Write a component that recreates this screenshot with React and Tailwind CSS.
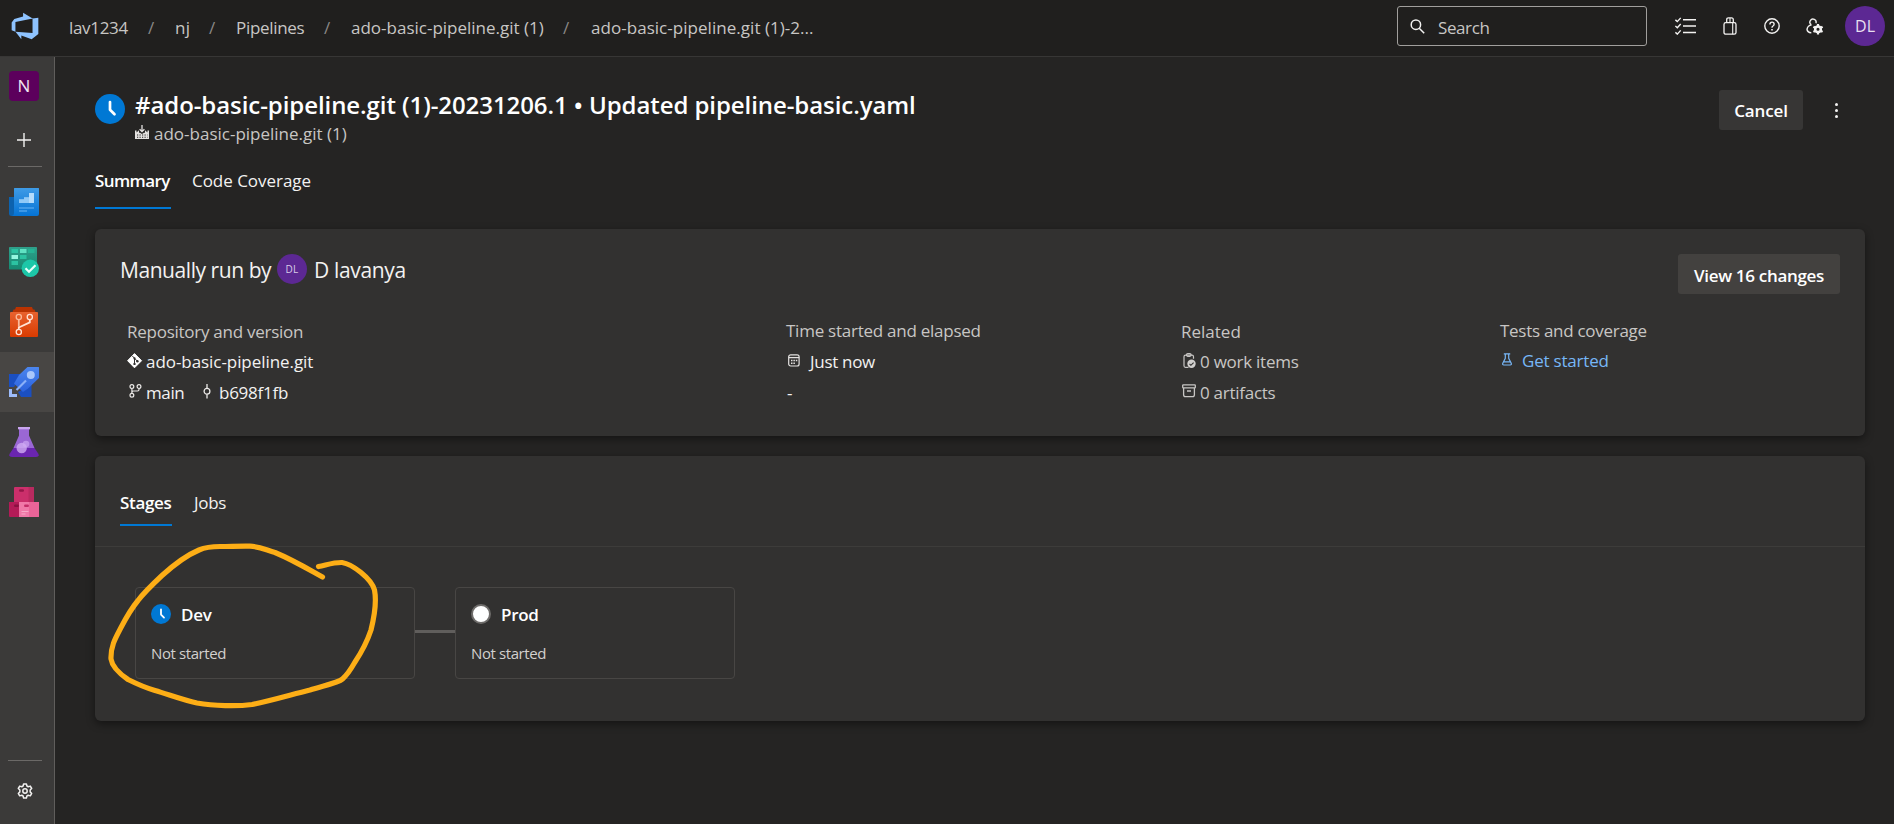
import React from "react";

/* ---------- product icons (side bar) ---------- */

const OverviewIcon = () => (
  <svg width="30" height="30" viewBox="0 0 30 30">
    <defs>
      <linearGradient id="ov" x1="0" y1="0" x2="0" y2="1">
        <stop offset="0" stopColor="#3f9be6" />
        <stop offset="1" stopColor="#0573d4" />
      </linearGradient>
    </defs>
    <path d="M0 10h6v19H2.500A2.500 2.500 0 0 1 0 26.500z" fill="#0d62ae" />
    <path d="M5 1.500q0-.5.500-.5h24q.5 0 .5.500V27a2 2 0 0 1-2 2H3q2-.5 2-3z" fill="url(#ov)" />
    <path d="M10 16v-3.500h5v-2h5v-4.500h5v10z" fill="#b5dcfb" />
    <path d="M10 16v-3.500h5v-2h5V16z" fill="#90c9f7" />
    <path d="M10 21h15M10 24h8" stroke="#6cb6f3" strokeWidth="1.200" />
  </svg>
);

const BoardsIcon = () => (
  <svg width="30" height="30" viewBox="0 0 30 30">
    <defs>
      <linearGradient id="bd" x1="0" y1="0" x2="0" y2="1">
        <stop offset="0" stopColor="#2fa08b" />
        <stop offset="1" stopColor="#168a72" />
      </linearGradient>
    </defs>
    <rect width="28" height="22.500" rx=".8" fill="url(#bd)" />
    <g fill="#2cc3a2">
      <rect x="2.500" y="2" width="6.500" height="4" />
      <rect x="19" y="2" width="6.500" height="4" fill="#25b394" />
      <rect x="11" y="8" width="6.500" height="4" />
      <rect x="2.500" y="14" width="6.500" height="4" />
    </g>
    <rect x="11" y="2" width="6.500" height="4" fill="#60e2c3" />
    <rect x="2.500" y="8" width="6.500" height="4" fill="#94f5df" />
    <circle cx="21.300" cy="21.300" r="8.700" fill="#1cc7a8" />
    <path d="M16.500 21.300l3.500 3.500 6.500-6.600" fill="none" stroke="#e4fffa" strokeWidth="2.200" />
  </svg>
);

const ReposIcon = () => (
  <svg width="30" height="30" viewBox="0 0 30 30">
    <defs>
      <linearGradient id="rp" x1="0" y1="0" x2="0" y2="1">
        <stop offset="0" stopColor="#e8622f" />
        <stop offset="1" stopColor="#d83b01" />
      </linearGradient>
    </defs>
    <path d="M7 0h16l1 2.500h1.500L26.500 5v2H3.500V5l1-2.500H6z" fill="#b93302" />
    <rect x="1" y="5" width="28" height="25" rx="1" fill="url(#rp)" />
    <g fill="none" stroke="#ffe3d6" strokeWidth="1.300">
      <circle cx="9.800" cy="10" r="2.600" stroke="#fbb999" />
      <circle cx="20.800" cy="10" r="2.600" />
      <circle cx="9.800" cy="25" r="2.600" />
      <path d="M9.800 12.800v7" stroke="#fbb999" strokeWidth="1.800" />
      <path d="M20.800 12.800v2.600L9.800 20.500v1.800" strokeWidth="1.800" />
    </g>
  </svg>
);

const PipelinesIcon = () => (
  <svg width="30" height="30" viewBox="0 0 30 30">
    <defs>
      <linearGradient id="pl" x1="0" y1="0" x2="0" y2="1">
        <stop offset="0" stopColor="#4c86ee" />
        <stop offset="1" stopColor="#2b62dd" />
      </linearGradient>
    </defs>
    <path d="M0 7h14L5 20H0zM9 25l13.500-7V30H12z" fill="#1b4fc0" />
    <path d="M18.500 0H29.500q.5 0 .5.500V11L19 21.500 14 25 5 16.500 10 8z" fill="url(#pl)" />
    <circle cx="21.800" cy="8" r="4" fill="#a9c7fb" />
    <path d="M17 13.500L7.500 23" stroke="#8ab0f8" strokeWidth="2.200" />
    <path d="M0 22h3v5h5v3H0z" fill="#9dbcfa" />
  </svg>
);

const TestPlansIcon = () => (
  <svg width="30" height="30" viewBox="0 0 30 30">
    <path d="M10 2h10v6.500L25.500 21H4.500L10 8.500z" fill="#9a67d4" />
    <path d="M4.500 21h21l4 6q1 3-2.500 3H3q-3.500 0-2.500-3z" fill="#6a25b0" />
    <rect x="9" y="0" width="12" height="2.300" fill="#c8a5ee" />
    <circle cx="17" cy="17" r="3.300" fill="#bd93ea" />
    <circle cx="12.700" cy="21" r="5.200" fill="#cfabf3" fillOpacity=".8" />
  </svg>
);

const ArtifactsIcon = () => (
  <svg width="30" height="30" viewBox="0 0 30 30">
    <path d="M5 .8Q5 0 6 0h18q1 0 1 .8V15H5z" fill="#cb2f6b" />
    <path d="M19.500 0H24q1 0 1 .8V15h-5.500z" fill="#b92a60" />
    <rect x="10" y="2.200" width="5" height="2.500" rx="1.200" fill="#951748" />
    <path d="M0 15h10v15H1q-1 0-1-1z" fill="#b31b57" />
    <rect x="5" y="17.500" width="5" height="2.500" rx="1.200" fill="#8a1140" />
    <path d="M10 15h20v14q0 1-1 1H10z" fill="#f078a8" />
    <path d="M20 15h10v14q0 1-1 1h-9z" fill="#ea6498" />
    <rect x="15" y="17.500" width="5" height="2.500" rx="1.200" fill="#c42d68" />
    <path d="M12.500 24.500h7M12.500 27h4" stroke="#f7a9c8" strokeWidth="1.100" />
  </svg>
);

/* ---------- small glyphs ---------- */

const Gear = () => (
  <svg width="16" height="16" viewBox="0 0 16 16" fill="none" stroke="#f3f2f1" strokeWidth="1.500" strokeLinejoin="round">
    <path d="M6.600.9h2.800l.5 2.100 1.300.75 2.100-.65 1.400 2.400L13.150 7v1.900l1.550 1.550-1.400 2.400-2.100-.6-1.300.75-.5 2.100H6.600l-.5-2.100-1.300-.75-2.100.6-1.400-2.400L2.850 8.900V7L1.300 5.500l1.400-2.400 2.100.65L6.100 3z" />
    <circle cx="8" cy="8" r="2.200" />
  </svg>
);

const Clock = ({ size }) => (
  <svg width={size} height={size} viewBox="0 0 30 30" className="shrink-0">
    <circle cx="15" cy="15" r="15" fill="#0078d4" />
    <path d="M15 8v7.800l4.500 4.500" fill="none" stroke="#fff" strokeWidth="2.700" strokeLinecap="round" strokeLinejoin="round" />
  </svg>
);

const Checklist = () => (
  <svg width="21" height="18" viewBox="0 0 21 18" fill="none" stroke="#f3f2f1" strokeWidth="1.400">
    <path d="M8 2.800h13M8 9h13M8 15.500h13" />
    <path d="M.4 2.800L2.300 4.600 5.700.9M.4 8.900l1.900 1.800 3.400-3.700M.4 15.300l1.900 1.800 3.400-3.700" />
  </svg>
);

const Bag = () => (
  <svg width="14" height="18" viewBox="0 0 14 18" fill="none" stroke="#f3f2f1" strokeWidth="1.300">
    <rect x="1" y="5.600" width="12" height="11.600" rx="1.800" />
    <path d="M3.700 5.600V2.700Q3.700.8 5.500.8h3q1.800 0 1.800 1.900V5.600" />
    <path d="M7 1v4.600M9.700 5.600v11.600" strokeWidth="1.100" />
  </svg>
);

const Help = () => (
  <svg width="16" height="16" viewBox="0 0 16 16" fill="none" stroke="#f3f2f1" strokeWidth="1.400">
    <circle cx="8" cy="8" r="7.200" />
    <path d="M5.900 6.400Q5.900 4.100 8 4.100t2.100 2.100Q10.100 7.300 9 8T8 9.800" />
    <path d="M8 10.900v1.500" strokeWidth="1.600" />
  </svg>
);

const UserGear = () => (
  <svg width="18" height="17" viewBox="0 0 18 17" fill="none" stroke="#f3f2f1" strokeWidth="1.400">
    <path d="M5.100 6.600A3.100 3.100 0 1 1 9.900 5.200" />
    <path d="M5.600 6.900Q1.400 7.600 1.100 11.300M.9 10.600Q1.200 14.600 5.300 14.700" />
    <circle cx="12" cy="11.300" r="2.800" strokeWidth="2.500" />
    <path d="M12 6v2.300M12 14.300v2.300M7.400 8.700l2 1.200M14.600 12.700l2 1.200M7.400 13.900l2-1.200M14.600 9.900l2-1.200" strokeWidth="2.200" />
  </svg>
);

const Magnifier = () => (
  <svg width="15" height="15" viewBox="0 0 15 15" fill="none" stroke="#f3f2f1" strokeWidth="1.500">
    <circle cx="5.900" cy="5.700" r="4.700" />
    <path d="M9.200 9.200l5 5" />
  </svg>
);

const Factory = () => (
  <svg width="14" height="15" viewBox="0 0 14 15" className="shrink-0">
    <path d="M0 14V5.500h1.500v2L4 5.300v2.500h1L7 9l2-1.200h1V5.300l2.500 2.200v-2H14V14z" fill="#e4e2e0" />
    <path d="M7 0v6.500M4.600 4.200L7 6.600l2.400-2.400" fill="none" stroke="#e4e2e0" strokeWidth="1.300" />
    <path d="M2 10h10.500M2 12.300h10.500" stroke="#252423" strokeWidth="1.100" strokeDasharray="1.200 1.300" />
  </svg>
);

const GitMark = () => (
  <svg width="16" height="16" viewBox="0 0 16 16" className="shrink-0">
    <path d="M7.500.6L14.600 7.700 7.500 14.800.6 7.700z" fill="#fff" stroke="#fff" strokeLinejoin="round" />
    <path d="M5.200 2.800L7.500 5.300v6M7.500 5.300l2.900 2.900" fill="none" stroke="#323130" strokeWidth="1" />
    <circle cx="7.500" cy="5.400" r="1.100" fill="#323130" />
    <circle cx="7.500" cy="10.900" r="1.200" fill="#323130" />
    <circle cx="10.400" cy="8.200" r="1.200" fill="#323130" />
  </svg>
);

const Branch = () => (
  <svg width="13" height="14" viewBox="0 0 13 14" fill="none" stroke="#eceae8" strokeWidth="1.200" className="shrink-0">
    <circle cx="2.900" cy="2.600" r="1.900" />
    <circle cx="10" cy="2.600" r="1.900" />
    <circle cx="2.900" cy="11.300" r="1.900" />
    <path d="M2.900 4.500v4.900M10 4.500V5.500Q10 7 8.500 7H4.500Q2.900 7 2.900 8.500" />
  </svg>
);

const Commit = () => (
  <svg width="8" height="15" viewBox="0 0 8 15" fill="none" stroke="#eceae8" strokeWidth="1.300" className="shrink-0">
    <circle cx="4" cy="7.300" r="2.900" />
    <path d="M4 0v4.400M4 10.200v4.400" />
  </svg>
);

const Calendar = () => (
  <svg width="12" height="13" viewBox="0 0 12 13" fill="none" stroke="#e4e2e0" strokeWidth="1.200" className="shrink-0">
    <rect x=".7" y=".8" width="10.400" height="11.200" rx="2" />
    <path d="M.7 3.600h10.400" strokeWidth="1.300" />
    <path d="M3 6.600h6.400M3 9.300h4" strokeWidth="1.500" strokeDasharray="1.500 .9" />
  </svg>
);

const WorkItem = () => (
  <svg width="15" height="16" viewBox="0 0 15 16" fill="none" stroke="#c8c6c4" strokeWidth="1.200" className="shrink-0">
    <path d="M5.500 14.300H2.500Q1 14.300 1 12.800V3.700Q1 2.200 2.500 2.200h6.500Q10.500 2.200 10.500 3.700v2" />
    <rect x="3.500" y=".7" width="4.600" height="2.600" rx="1.200" />
    <circle cx="8.500" cy="10.800" r="4.200" fill="#d2d0ce" stroke="none" />
    <path d="M6.500 10.900l1.400 1.400 2.700-2.700" stroke="#323130" strokeWidth="1.100" />
  </svg>
);

const Archive = () => (
  <svg width="14" height="14" viewBox="0 0 14 14" fill="none" stroke="#c8c6c4" strokeWidth="1.300" className="shrink-0">
    <rect x=".7" y=".9" width="12.600" height="3" rx=".6" />
    <path d="M1.600 4v6.800q0 1.900 1.900 1.900h7q1.900 0 1.900-1.900V4" />
    <path d="M5 7h4" strokeWidth="1.500" />
  </svg>
);

const Flask = () => (
  <svg width="10" height="13" viewBox="0 0 10 13" fill="none" stroke="#77b7f7" strokeWidth="1.200" className="shrink-0">
    <path d="M1.800.8h6.400M3.300.8v4.600L.8 10.200Q.2 12 1.800 12h6.400q1.600 0 1-1.800L6.700 5.400V.8M2 8.800h6" />
  </svg>
);

const Logo = () => (
  <svg width="30" height="30" viewBox="0 0 18 18">
    <path
      fill="#8ec3ff"
      d="M17 4v9.740l-4 3.280-6.200-2.260V17l-3.510-4.590 10.230.8V4.440zm-3.410.49L7.850 1v2.290L2.580 4.840 1 6.870v4.610l2.260 1V6.570z"
    />
  </svg>
);

/* ---------- building blocks ---------- */

const Slash = ({ className }) => <span className={"w-[9px] text-[#8a8886] " + className}>/</span>;

const NavItem = ({ children, active }) => (
  <div className={"flex h-[60px] items-center pl-[9px] " + (active ? "bg-[#484644]" : "")}>{children}</div>
);

const Stage = ({ icon, name }) => (
  <div className="h-[92px] w-[280px] rounded border border-[#484644] pl-[15px] pt-[15px]">
    <div className="flex h-6 gap-[10px]">
      <div className="mt-px w-5">{icon}</div>
      <span className="font-semibold tracking-[-0.3px] text-white">{name}</span>
    </div>
    <div className="mt-[15px] text-[15px] leading-[22px] tracking-[-0.4px] text-[#d2d0ce]">Not started</div>
  </div>
);

export default function App() {
  return (
    <div className="flex h-screen flex-col overflow-hidden bg-[#252423] font-['Open_Sans','Noto_Sans',sans-serif] text-[17px] leading-6 text-[#f3f2f1]">
      <header className="flex h-[57px] shrink-0 items-start border-b border-[#373635] bg-[#201f1e]">
        <div className="ml-[10px] mt-[11px]"><Logo /></div>
        <nav className="ml-[29px] mt-4 flex whitespace-nowrap text-[#c8c6c4]">
          <span className="w-[79px] tracking-[-0.31px]">lav1234</span>
          <Slash className="" />
          <span className="ml-[18px] w-[34px] tracking-[0.3px]">nj</span>
          <Slash className="" />
          <span className="ml-[18px] w-[88px] tracking-[-0.31px]">Pipelines</span>
          <Slash className="" />
          <span className="ml-[18px] w-[212px]">ado-basic-pipeline.git (1)</span>
          <Slash className="" />
          <span className="ml-[19px] tracking-[0.04px]">ado-basic-pipeline.git (1)-2...</span>
        </nav>
        <div className="ml-auto mt-[6px] flex h-10 w-[250px] rounded-[3px] border border-[#a19f9d]">
          <div className="ml-[12px] mt-[12px]"><Magnifier /></div>
          <span className="ml-[13px] mt-[9px] tracking-[-0.4px] text-[#c8c6c4]">Search</span>
        </div>
        <div className="ml-[28px] mt-[17px] w-[21px]"><Checklist /></div>
        <div className="ml-[27px] mt-[17px] w-[14px]"><Bag /></div>
        <div className="ml-[27px] mt-[18px] w-[16px]"><Help /></div>
        <div className="ml-[26px] mt-[18px] w-[18px]"><UserGear /></div>
        <div className="ml-[21px] mr-[9px] mt-[6px] flex h-10 w-10 items-center justify-center rounded-full bg-[#5c2893] text-[16px] text-[#e8dff0]">
          DL
        </div>
      </header>

      <div className="flex min-h-0 flex-1">
        <aside className="flex w-[55px] shrink-0 flex-col border-r border-[#605e5c] bg-[#3b3a39]">
          <div className="ml-[9px] mt-[14px] flex h-[30px] w-[30px] items-center justify-center rounded bg-[#5c005c] text-[17px] text-[#f0e6f0]">
            N
          </div>
          <div className="ml-[17px] mt-[32px] h-[15px]">
            <svg width="15" height="15" viewBox="0 0 15 15">
              <path d="M7 0v14M0 7h14" stroke="#f3f2f1" strokeWidth="1.400" />
            </svg>
          </div>
          <div className="mb-[5px] ml-2 mt-[18px] h-px w-[34px] shrink-0 bg-[#6b6967]" />
          <NavItem><OverviewIcon /></NavItem>
          <NavItem><BoardsIcon /></NavItem>
          <NavItem><ReposIcon /></NavItem>
          <NavItem active><PipelinesIcon /></NavItem>
          <NavItem><TestPlansIcon /></NavItem>
          <NavItem><ArtifactsIcon /></NavItem>
          <div className="ml-2 mt-auto h-px w-[34px] bg-[#6b6967]" />
          <div className="mb-[25px] ml-[16.500px] mt-[22px]"><Gear /></div>
        </aside>

        <main className="flex-1 pl-10 pr-[29px] pt-8">
          <div className="flex h-[56px]">
            <div className="mt-[5px]"><Clock size={30} /></div>
            <div className="ml-[10px] whitespace-nowrap">
              <h1 className="text-[24px] font-semibold leading-8 tracking-[-0.075px] text-white">
                #ado-basic-pipeline.git (1)-20231206.1 • Updated pipeline-basic.yaml
              </h1>
              <div className="mt-px flex gap-[5px] text-[#c8c6c4]">
                <div className="mt-[3px]"><Factory /></div>
                <span>ado-basic-pipeline.git (1)</span>
              </div>
            </div>
            <button className="ml-auto mt-px h-10 w-[84px] rounded-[3px] bg-[#373635] pt-[2px] font-semibold tracking-[-0.13px] text-white">
              Cancel
            </button>
            <div className="ml-[32px] mr-[27px] mt-[14px] flex flex-col gap-[3px]">
              <i className="h-[3px] w-[3px] rounded-full bg-[#f3f2f1]" />
              <i className="h-[3px] w-[3px] rounded-full bg-[#f3f2f1]" />
              <i className="h-[3px] w-[3px] rounded-full bg-[#f3f2f1]" />
            </div>
          </div>

          <div className="mt-2 flex h-[56px] gap-[21px]">
            <div className="w-[76px] border-b-2 border-[#0078d4] pt-4 font-semibold tracking-[-0.6px] text-white">Summary</div>
            <div className="pt-4 tracking-[-0.03px]">Code Coverage</div>
          </div>

          <section className="mt-5 h-[207px] rounded-md bg-[#323130] pl-[25px] pr-[25px] pt-[25px] shadow-[0_3px_8px_rgba(0,0,0,0.45)]">
            <div className="flex h-10 items-start text-[21px] leading-[30px]">
              <span className="mt-px w-[157px] tracking-[-0.44px]">Manually run by</span>
              <div className="flex h-[30px] w-[30px] items-center justify-center rounded-full bg-[#5c2893] text-[10px] tracking-[0.3px] text-[#d9cbe8]">DL</div>
              <span className="ml-[7px] mt-px tracking-[-0.35px]">D lavanya</span>
              <button className="ml-auto h-10 w-[162px] rounded-[3px] bg-[#43413f] pt-[3px] text-[17px] font-semibold leading-6 tracking-[-0.31px] text-white">
                View 16 changes
              </button>
            </div>

            <div className="ml-[7px] mt-[26px] grid grid-cols-[660px_394px_319px_1fr] whitespace-nowrap">
              <div>
                <div className="tracking-[-0.26px] text-[#c8c6c4]">Repository and version</div>
                <div className="mt-[6px] flex gap-[4px]">
                  <div className="mt-[3px]"><GitMark /></div>
                  <span className="-ml-px tracking-[-0.06px]">ado-basic-pipeline.git</span>
                </div>
                <div className="mt-[7px] flex">
                  <div className="mt-[3px] pl-[2px]"><Branch /></div>
                  <span className="ml-[4px] w-[57px] tracking-[-0.4px]">main</span>
                  <div className="mt-[3px]"><Commit /></div>
                  <span className="ml-[8px] tracking-[-0.25px]">b698f1fb</span>
                </div>
              </div>
              <div>
                <div className="-ml-px -mt-px tracking-[-0.25px] text-[#c8c6c4]">Time started and elapsed</div>
                <div className="mt-[7px] flex">
                  <div className="ml-px mt-[4px]"><Calendar /></div>
                  <span className="ml-[10px] tracking-[-0.3px]">Just now</span>
                </div>
                <div className="mt-[7px]">-</div>
              </div>
              <div className="text-[#c8c6c4]">
                <div>Related</div>
                <div className="mt-[6px] flex">
                  <div className="ml-[2px] mt-[3px]"><WorkItem /></div>
                  <span className="ml-[2px] tracking-[-0.25px]">0 work items</span>
                </div>
                <div className="mt-[7px] flex">
                  <div className="ml-px mt-[3px]"><Archive /></div>
                  <span className="ml-[4px] tracking-[-0.27px]">0 artifacts</span>
                </div>
              </div>
              <div>
                <div className="-mt-px tracking-[-0.28px] text-[#c8c6c4]">Tests and coverage</div>
                <div className="mt-[6px] flex text-[#77b7f7]">
                  <div className="ml-[2px] mt-[4px]"><Flask /></div>
                  <span className="ml-[10px] tracking-[-0.2px]">Get started</span>
                </div>
              </div>
            </div>
          </section>

          <section className="relative mt-5 h-[265px] rounded-md bg-[#323130] shadow-[0_3px_8px_rgba(0,0,0,0.45)]">
            <div className="flex h-[91px] items-start gap-[22px] border-b border-[#3d3c3a] pl-[25px] pt-[35px]">
              <div className="h-[35px] w-[52px] border-b-2 border-[#0078d4] font-semibold tracking-[-0.33px] text-white">Stages</div>
              <div className="tracking-[-0.3px]">Jobs</div>
            </div>
            <div className="flex items-start pl-10 pt-10">
              <Stage icon={<Clock size={20} />} name="Dev" />
              <div className="mt-[43px] h-[3px] w-10 bg-[#605e5c]" />
              <Stage
                icon={<div className="h-5 w-5 rounded-full border-2 border-[#6e6c6a] bg-white" />}
                name="Prod"
              />
            </div>
            {/* hand-drawn highlight over the Dev stage */}
            <svg className="pointer-events-none absolute left-0 top-[74px]" width="300" height="190" viewBox="95 530 300 190">
              <path
                d="M318.500 566.500C328 564.500 334 562.300 342 562.500C352 564 371 578 374.500 590C377 603 374 618 371 630C367 642 361 653 355 662C351 669 347 675 342.500 679C338 683 322 686 310 690C290 695 270 701 252 704.500C237 706.500 214 706 197 703C183 700 170 695 155 690.500C143 687 134 682.500 128 679.500C120 674 112 666 111 659C110.500 646 116 637 121 627.500C127 616 131 609 138 600.500C144 592.500 154 583 162 575.500C172 566.500 186 555.500 199 550C206 547 212 546.500 220 546.500C230 546.500 240 546 250 546.200C260 546.500 266 550 275 552.500C293 560 308 569 322.500 577"
                fill="none"
                stroke="#fdae16"
                strokeWidth="5.200"
                strokeLinecap="round"
                strokeLinejoin="round"
              />
            </svg>
          </section>
        </main>
      </div>
    </div>
  );
}
